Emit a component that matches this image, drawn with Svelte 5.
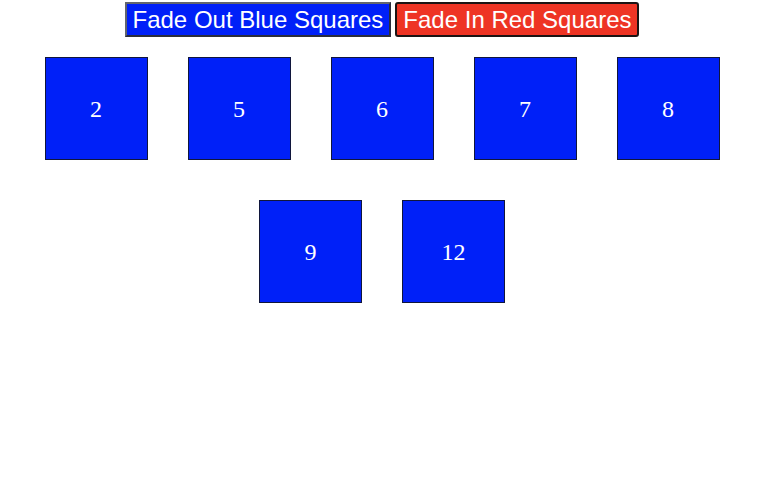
<script>
  const numbers = [2, 5, 6, 7, 8, 9, 12];
  let blueFaded = $state(false);
</script>

<main>
  <div class="controls">
    <button class="blue" onclick={() => (blueFaded = true)}>Fade Out Blue Squares</button>
    <button class="red" onclick={() => (blueFaded = false)}>Fade In Red Squares</button>
  </div>
  <div class="squares">
    {#each numbers as number}
      <div class="square" class:faded={blueFaded}>{number}</div>
    {/each}
  </div>
</main>

<style>
  :global(body) {
    margin: 0;
    background: #fff;
  }

  main {
    padding: 2px 4px 0;
  }

  .controls {
    display: flex;
    justify-content: center;
    gap: 4px;
    padding-left: 4px;
  }

  button {
    box-sizing: border-box;
    height: 35px;
    padding: 0 6px;
    border: 2px solid #1c1414;
    color: #fff;
    font-family: "Liberation Sans", Arial, sans-serif;
    font-size: 24px;
    line-height: 31px;
    white-space: nowrap;
  }

  .blue {
    border-color: #62656e #2b2d3c #2b2d3c #62656e;
    background: #0020f8;
  }

  .red {
    border-radius: 3px;
    background: #ee3424;
  }

  .squares {
    display: flex;
    flex-wrap: wrap;
    justify-content: center;
    gap: 40px;
    padding: 20px 0 0 4px;
  }

  .square {
    box-sizing: border-box;
    display: flex;
    align-items: center;
    justify-content: center;
    width: 103px;
    height: 103px;
    padding-top: 2px;
    border: 1px solid #10163c;
    background: #0020f8;
    color: #fff;
    font-family: "Liberation Serif", "Times New Roman", serif;
    font-size: 24px;
    transition: opacity 0.5s;
  }

  .faded {
    opacity: 0;
  }
</style>
